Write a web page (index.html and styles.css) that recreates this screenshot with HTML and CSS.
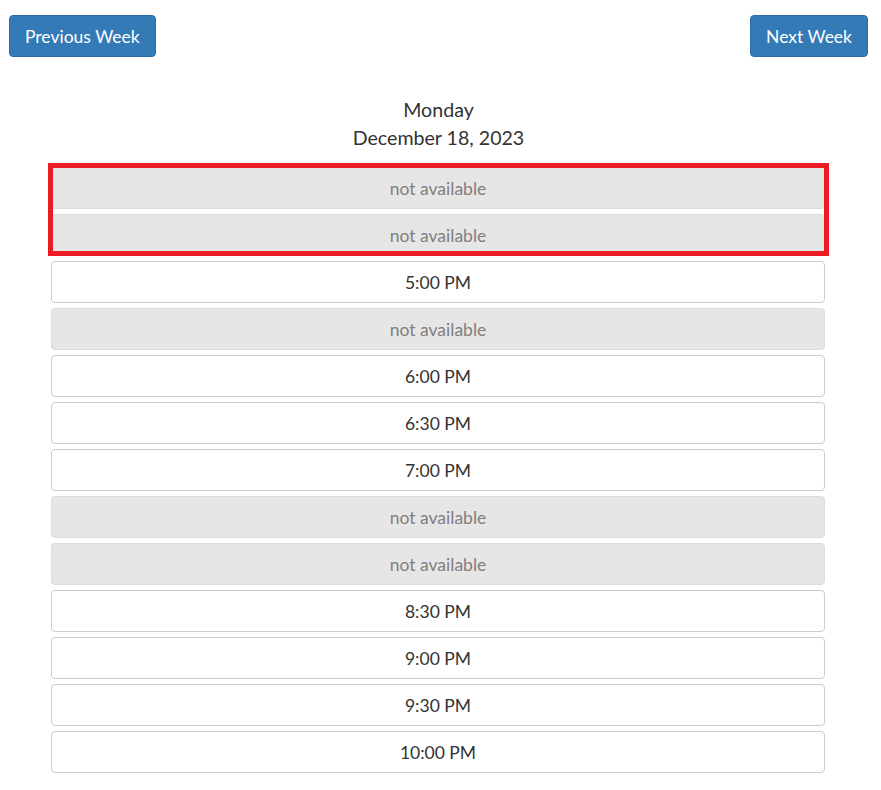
FILE: index.html
```html
<!DOCTYPE html>
<html lang="en">
<head>
  <meta charset="UTF-8">
  <meta name="viewport" content="width=device-width, initial-scale=1.0">
  <title>Schedule</title>
  <link rel="stylesheet" href="styles.css">
</head>
<body>
  <div class="container">
    <div class="week-nav">
      <button class="btn">Previous Week</button>
      <button class="btn">Next Week</button>
    </div>

    <div class="day">
      <div class="day-name">Monday</div>
      <div class="day-date">December 18, 2023</div>
    </div>

    <div class="slots">
      <div class="highlight">
        <div class="slot disabled">not available</div>
        <div class="slot disabled">not available</div>
      </div>
      <div class="slot">5:00 PM</div>
      <div class="slot disabled">not available</div>
      <div class="slot">6:00 PM</div>
      <div class="slot">6:30 PM</div>
      <div class="slot">7:00 PM</div>
      <div class="slot disabled">not available</div>
      <div class="slot disabled">not available</div>
      <div class="slot">8:30 PM</div>
      <div class="slot">9:00 PM</div>
      <div class="slot">9:30 PM</div>
      <div class="slot">10:00 PM</div>
    </div>
  </div>
</body>
</html>
```
FILE: styles.css
```css
body {
  margin: 0;
  font-family: Lato, "Open Sans", sans-serif;
  color: #333;
  background: #fff;
}

.container {
  padding: 15px 13px 0 9px;
}

.week-nav {
  display: flex;
  justify-content: space-between;
}

.btn {
  height: 42px;
  padding: 0 15px;
  font-family: inherit;
  font-size: 17.5px;
  color: #fff;
  background: #337ab7;
  border: 1px solid #2e6da4;
  border-radius: 4px;
  cursor: pointer;
}

.day {
  margin-top: 39px;
  text-align: center;
  font-size: 19.6px;
  line-height: 28px;
}

.slots {
  margin: 15px 43px 0 42px;
}

.highlight {
  position: relative;
}

.highlight::after {
  content: '';
  position: absolute;
  top: -4px;
  left: -3px;
  right: -4px;
  bottom: 0;
  border: 5px solid #ed1c24;
  pointer-events: none;
}

.slot {
  display: flex;
  align-items: center;
  justify-content: center;
  box-sizing: border-box;
  height: 42px;
  margin-bottom: 5px;
  font-size: 17.5px;
  border: 1px solid #ccc;
  border-radius: 4px;
  background: #fff;
}

.slot.disabled {
  color: #7f7f7f;
  background: #e6e6e6;
  border-color: #dcdcdc;
}
```
